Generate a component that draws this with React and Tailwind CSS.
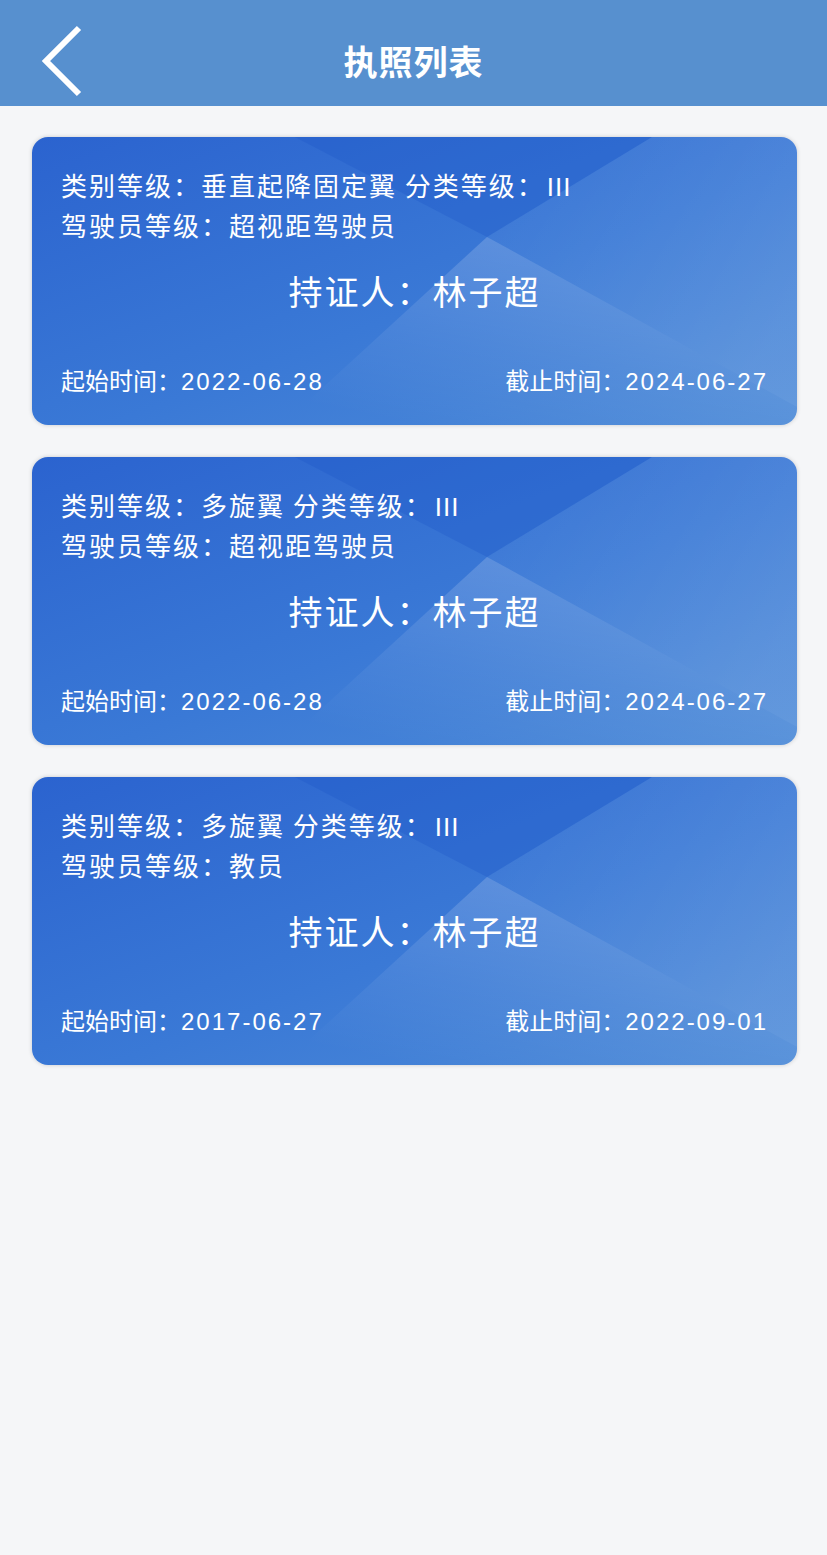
import React from 'react';

const licenses = [
  { type: '垂直起降固定翼', level: 'III', pilot: '超视距驾驶员', holder: '林子超', start: '2022-06-28', end: '2024-06-27' },
  { type: '多旋翼', level: 'III', pilot: '超视距驾驶员', holder: '林子超', start: '2022-06-28', end: '2024-06-27' },
  { type: '多旋翼', level: 'III', pilot: '教员', holder: '林子超', start: '2017-06-27', end: '2022-09-01' },
];

// faceted blue card background
const CardBg = () => (
  <svg className="absolute inset-0 w-full h-full" viewBox="0 0 765 288" preserveAspectRatio="none">
    <defs>
      <linearGradient id="base" x1="0" y1="0" x2="1" y2="1">
        <stop offset="0" stopColor="#2b63cf" />
        <stop offset="0.55" stopColor="#3a79d6" />
        <stop offset="1" stopColor="#4f8cd8" />
      </linearGradient>
      <linearGradient id="below" x1="0.75" y1="0.1" x2="0.25" y2="1">
        <stop offset="0" stopColor="#ffffff" stopOpacity="0.2" />
        <stop offset="0.6" stopColor="#ffffff" stopOpacity="0.07" />
        <stop offset="1" stopColor="#ffffff" stopOpacity="0" />
      </linearGradient>
      <linearGradient id="topright" x1="0" y1="0" x2="1" y2="0.6">
        <stop offset="0" stopColor="#ffffff" stopOpacity="0.02" />
        <stop offset="1" stopColor="#ffffff" stopOpacity="0.12" />
      </linearGradient>
    </defs>
    <rect width="765" height="288" fill="url(#base)" />
    <polygon points="263,0 620,0 455,100" fill="#1f58c9" opacity="0.35" />
    <polygon points="620,0 765,0 765,270 455,100" fill="url(#topright)" />
    <polygon points="455,100 765,270 765,288 250,288" fill="url(#below)" />
  </svg>
);

const LicenseCard = ({ item }) => (
  <div className="relative h-[288px] rounded-[16px] overflow-hidden shadow-[0_0_4px_rgba(0,0,0,0.18)] text-white">
    <CardBg />
    <div className="relative flex flex-col h-full px-[29px] pt-[29px]">
      <div className="text-[26px] leading-[38px] tracking-[2px]">
        类别等级：{item.type} 分类等级：<span className="font-['Liberation_Sans'] tracking-[1px] ml-[2px]">{item.level}</span>
      </div>
      <div className="text-[26px] leading-[38px] tracking-[2px]">驾驶员等级：{item.pilot}</div>
      <div className="mt-[23px] text-center text-[34px] leading-[48px] tracking-[2px]">持证人：{item.holder}</div>
      <div className="mt-[49px] flex justify-between text-[24px] leading-[32px]">
        <span>
          起始时间：<span className="font-['Liberation_Sans'] tracking-[2px]">{item.start}</span>
        </span>
        <span>
          截止时间：<span className="font-['Liberation_Sans'] tracking-[2px]">{item.end}</span>
        </span>
      </div>
    </div>
  </div>
);

export default function App() {
  return (
    <div className="min-h-[1555px] bg-[#f5f6f8] font-['Noto_Sans_CJK_SC',sans-serif]">
      <div className="relative h-[106px] pt-[14px] bg-[#5790cf] flex items-center justify-center">
        <svg className="absolute left-[38px] top-[24px]" width="48" height="74" viewBox="0 0 48 74">
          <polyline points="41,4 8,37 41,70" fill="none" stroke="white" strokeWidth="6" strokeLinecap="butt" />
        </svg>
        <h1 className="text-white text-[34px] font-bold tracking-[1px]">执照列表</h1>
      </div>
      <div className="flex flex-col gap-[32px] pt-[31px] pl-[32px] pr-[30px]">
        {licenses.map((item, i) => (
          <LicenseCard key={i} item={item} />
        ))}
      </div>
    </div>
  );
}
